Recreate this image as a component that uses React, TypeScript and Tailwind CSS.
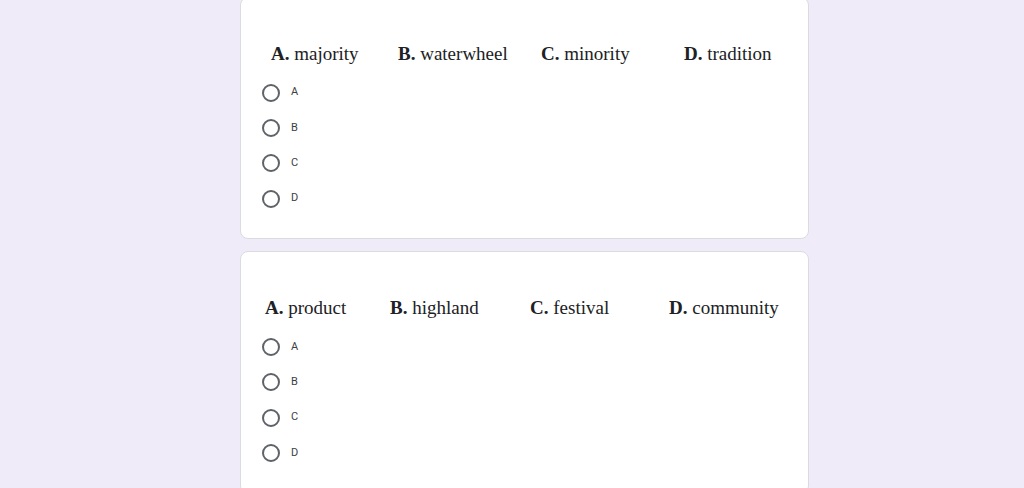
import React from "react";

type Q = { pl: string; widths: string[]; opts: [string, string][] };

const questions: Q[] = [
  {
    pl: "pl-[30px]",
    widths: ["w-[127px]", "w-[143px]", "w-[143px]", "w-[120px]"],
    opts: [
      ["A.", "majority"],
      ["B.", "waterwheel"],
      ["C.", "minority"],
      ["D.", "tradition"],
    ],
  },
  {
    pl: "pl-[24px]",
    widths: ["w-[125px]", "w-[140px]", "w-[139px]", "w-[130px]"],
    opts: [
      ["A.", "product"],
      ["B.", "highland"],
      ["C.", "festival"],
      ["D.", "community"],
    ],
  },
];

function Radio({ label }: { label: string }) {
  return (
    <div className="flex items-center h-[35.33px]">
      <div className="w-[18px] h-[18px] rounded-full border-2 border-[#5f6368] ml-[21px]" />
      <span
        className="ml-[11px] text-[11px] text-[#3c4043]"
        style={{ fontFamily: "Roboto, Arial, sans-serif" }}
      >
        {label}
      </span>
    </div>
  );
}

function Card({ q }: { q: Q }) {
  return (
    <div className="bg-white border border-[#dadce0] rounded-lg pt-[44px] pb-[22px]">
      <div
        className={`flex items-center h-[24px] ${q.pl} text-[19px] text-[#202124]`}
        style={{ fontFamily: '"Liberation Serif", "Times New Roman", serif' }}
      >
        {q.opts.map(([k, v], i) => (
          <div key={k} className={`${q.widths[i]} shrink-0 whitespace-nowrap`}>
            <span className="font-bold">{k}</span> {v}
          </div>
        ))}
      </div>
      <div className="mt-[9px]">
        {["A", "B", "C", "D"].map((l) => (
          <Radio key={l} label={l} />
        ))}
      </div>
    </div>
  );
}

export default function App() {
  return (
    <div className="w-[1024px] h-[488px] overflow-hidden bg-[#f0ebf8]">
      <div className="ml-[240px] w-[569px] -mt-[3px] flex flex-col gap-[12px]">
        {questions.map((q, i) => (
          <Card key={i} q={q} />
        ))}
      </div>
    </div>
  );
}
